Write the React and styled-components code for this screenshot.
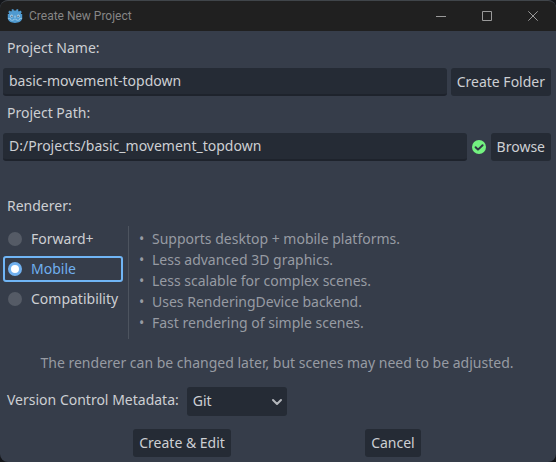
import React, { useState } from "react";
import styled, { createGlobalStyle } from "styled-components";

const GlobalStyle = createGlobalStyle`
  *, *::before, *::after { box-sizing: border-box; }
  html, body, #root { height: 100%; }
  body {
    margin: 0;
    background: #14161a;
    font-family: "Noto Sans", "Open Sans", sans-serif;
    font-size: 14px;
    line-height: 20px;
    color: #cdcfd3;
  }
  button, input, select { font: inherit; color: inherit; }
`;

const Window = styled.div`
  display: flex;
  flex-direction: column;
  min-height: 100%;
  overflow: hidden;
  border-top: 1px solid #40454a;
  border-radius: 8px;
  background: #363d4a;
`;

const TitleBar = styled.header`
  display: flex;
  align-items: center;
  height: 30px;
  padding-left: 7px;
  background: #202020;
  color: #868686;
`;

const Title = styled.h1`
  flex: 1;
  margin: 0 0 0 6px;
  font-family: Roboto, "Open Sans", sans-serif;
  font-size: 12px;
  font-weight: 400;
  line-height: 16px;
`;

const WindowButton = styled.button`
  display: grid;
  place-items: center;
  width: 46px;
  height: 30px;
  padding: 0;
  border: 0;
  background: none;
`;

const Form = styled.form`
  display: flex;
  flex: 1;
  flex-direction: column;
  padding: 4px 5px 4px 3px;
`;

const Label = styled.label`
  padding: 3px 4px;
  line-height: 20px;
`;

const FieldRow = styled.div`
  display: flex;
  align-items: center;
  gap: 4px;
  margin: 7px 0 4px;
`;

const TextInput = styled.input`
  flex: 1;
  min-width: 0;
  height: 28px;
  padding: 0 6px 2px;
  border: 0;
  border-bottom: 2px solid #1e232c;
  border-radius: 3px;
  outline: 0;
  background: #252b35;
`;

const Button = styled.button`
  height: 28px;
  padding: 0 6px;
  border: 0;
  border-radius: 3px;
  background: #252b35;
  white-space: nowrap;
`;

const Renderer = styled.fieldset`
  min-width: 0;
  margin: 28px 0 0;
  padding: 0;
  border: 0;
`;

const Legend = styled.legend`
  padding: 3px 4px;
`;

const RendererColumns = styled.div`
  display: flex;
  margin-top: 7px;
`;

const RadioGroup = styled.div`
  display: flex;
  flex-direction: column;
  gap: 4px;
  width: 120px;
`;

const RadioLabel = styled.label`
  display: flex;
  align-items: center;
  gap: 9px;
  height: 26px;
  padding-left: 3px;
  border: 2px solid ${(p) => (p.$active ? "#70b5f5" : "transparent")};
  border-radius: 3px;
  color: ${(p) => (p.$active ? "#70b0ef" : "inherit")};
`;

const Radio = styled.input`
  appearance: none;
  flex: none;
  width: 14px;
  height: 14px;
  margin: 0;
  border-radius: 50%;
  outline: 0;
  background: #555b66;
  &:checked {
    border: 3px solid #70b0ef;
    background: #fff;
  }
`;

const FeatureList = styled.ul`
  flex: 1;
  margin: 0 0 0 5px;
  padding: 2px 0 6px 10px;
  border-left: 1px solid #4d545f;
  list-style: none;
  color: #979ba3;
`;

const Feature = styled.li`
  display: flex;
  line-height: 21px;
  &::before {
    content: "•";
    width: 13px;
  }
`;

const Note = styled.p`
  margin: 14px 0;
  color: #979ba3;
  text-align: center;
`;

const MetadataRow = styled.div`
  display: flex;
  align-items: flex-start;
  gap: 4px;
`;

const SelectWrap = styled.div`
  display: grid;
  align-items: center;
  width: 100px;
  > * { grid-area: 1 / 1; }
  > svg {
    justify-self: end;
    margin-right: 4px;
    pointer-events: none;
  }
`;

const Select = styled.select`
  appearance: none;
  width: 100%;
  height: 29px;
  padding: 0 22px 1px 6px;
  border: 0;
  border-radius: 3px;
  outline: 0;
  background: #252b35;
`;

const Actions = styled.footer`
  display: flex;
  justify-content: space-evenly;
  gap: 4px;
  margin-top: 13px;
`;

const GodotLogo = () => (
  <svg width="16" height="16" viewBox="0 0 16 16" aria-hidden="true">
    <path
      fill="#4f9ad0"
      d="M6.2 1 4.6 1.5 4.8 3.1 4 3.6 2.7 2.6 1.2 4l1 1.4-.3.7L.8 6v4.6C1.2 13.4 4 15 8 15s6.8-1.6 7.2-4.4V6l-1.1.1-.3-.7 1-1.4-1.5-1.4-1.3 1-.8-.5.2-1.6L9.8 1 9.1 2.6H6.9z"
    />
    <path
      fill="none"
      stroke="#9fcbe8"
      strokeWidth=".8"
      d="M.9 10.3l2.5.3.3 1.5 2.6.2.3-1.1h2.8l.3 1.1 2.6-.2.3-1.5 2.5-.3"
    />
    <circle cx="4.7" cy="8.1" r="1.5" fill="#b5d8ee" />
    <circle cx="11.3" cy="8.1" r="1.5" fill="#b5d8ee" />
    <circle cx="4.9" cy="8.2" r=".7" fill="#414f5c" />
    <circle cx="11.1" cy="8.2" r=".7" fill="#414f5c" />
    <path stroke="#b5d8ee" strokeWidth="1" strokeLinecap="round" d="M8 8v1.4" />
  </svg>
);

const WINDOW_ICONS = [
  ["Minimize", "M0 5.5h10"],
  ["Maximize", "M.5 .5h9v9h-9z"],
  ["Close", "M.3 .3l9.4 9.4M9.7 .3.3 9.7"],
];

const ValidIcon = () => (
  <svg width="16" height="16" viewBox="0 0 16 16" role="img" aria-label="Valid path">
    <circle cx="8" cy="8" r="7" fill="#73f280" />
    <path
      d="M4.6 8.2 7 10.6l4.6-4.4"
      fill="none"
      stroke="#303845"
      strokeWidth="2"
      strokeLinecap="round"
      strokeLinejoin="round"
    />
  </svg>
);

const Chevron = () => (
  <svg width="12" height="12" viewBox="0 0 12 12" aria-hidden="true">
    <path
      d="M2 4l4 4 4-4"
      fill="none"
      stroke="#b4b7bc"
      strokeWidth="2"
      strokeLinecap="round"
      strokeLinejoin="round"
    />
  </svg>
);

const RENDERERS = ["Forward+", "Mobile", "Compatibility"];

const FEATURES = [
  "Supports desktop + mobile platforms.",
  "Less advanced 3D graphics.",
  "Less scalable for complex scenes.",
  "Uses RenderingDevice backend.",
  "Fast rendering of simple scenes.",
];

export default function App() {
  const [renderer, setRenderer] = useState("Mobile");

  return (
    <>
      <GlobalStyle />
      <Window>
        <TitleBar>
          <GodotLogo />
          <Title>Create New Project</Title>
          {WINDOW_ICONS.map(([name, path]) => (
            <WindowButton key={name} type="button" aria-label={name}>
              <svg width="10" height="10" viewBox="0 0 10 10" aria-hidden="true">
                <path d={path} fill="none" stroke="#9a9a9a" />
              </svg>
            </WindowButton>
          ))}
        </TitleBar>

        <Form onSubmit={(e) => e.preventDefault()}>
          <Label htmlFor="name">Project Name:</Label>
          <FieldRow>
            <TextInput id="name" defaultValue="basic-movement-topdown" spellCheck={false} />
            <Button type="button">Create Folder</Button>
          </FieldRow>

          <Label htmlFor="path">Project Path:</Label>
          <FieldRow>
            <TextInput id="path" defaultValue="D:/Projects/basic_movement_topdown" spellCheck={false} />
            <ValidIcon />
            <Button type="button">Browse</Button>
          </FieldRow>

          <Renderer>
            <Legend>Renderer:</Legend>
            <RendererColumns>
              <RadioGroup>
                {RENDERERS.map((name) => (
                  <RadioLabel key={name} $active={name === renderer}>
                    <Radio
                      type="radio"
                      name="renderer"
                      value={name}
                      checked={name === renderer}
                      onChange={() => setRenderer(name)}
                    />
                    {name}
                  </RadioLabel>
                ))}
              </RadioGroup>
              <FeatureList>
                {FEATURES.map((text) => (
                  <Feature key={text}>{text}</Feature>
                ))}
              </FeatureList>
            </RendererColumns>
          </Renderer>

          <Note>The renderer can be changed later, but scenes may need to be adjusted.</Note>

          <MetadataRow>
            <Label htmlFor="vcs">Version Control Metadata:</Label>
            <SelectWrap>
              <Select id="vcs" defaultValue="Git">
                <option>None</option>
                <option>Git</option>
              </Select>
              <Chevron />
            </SelectWrap>
          </MetadataRow>

          <Actions>
            <Button type="submit">Create &amp; Edit</Button>
            <Button type="button">Cancel</Button>
          </Actions>
        </Form>
      </Window>
    </>
  );
}
